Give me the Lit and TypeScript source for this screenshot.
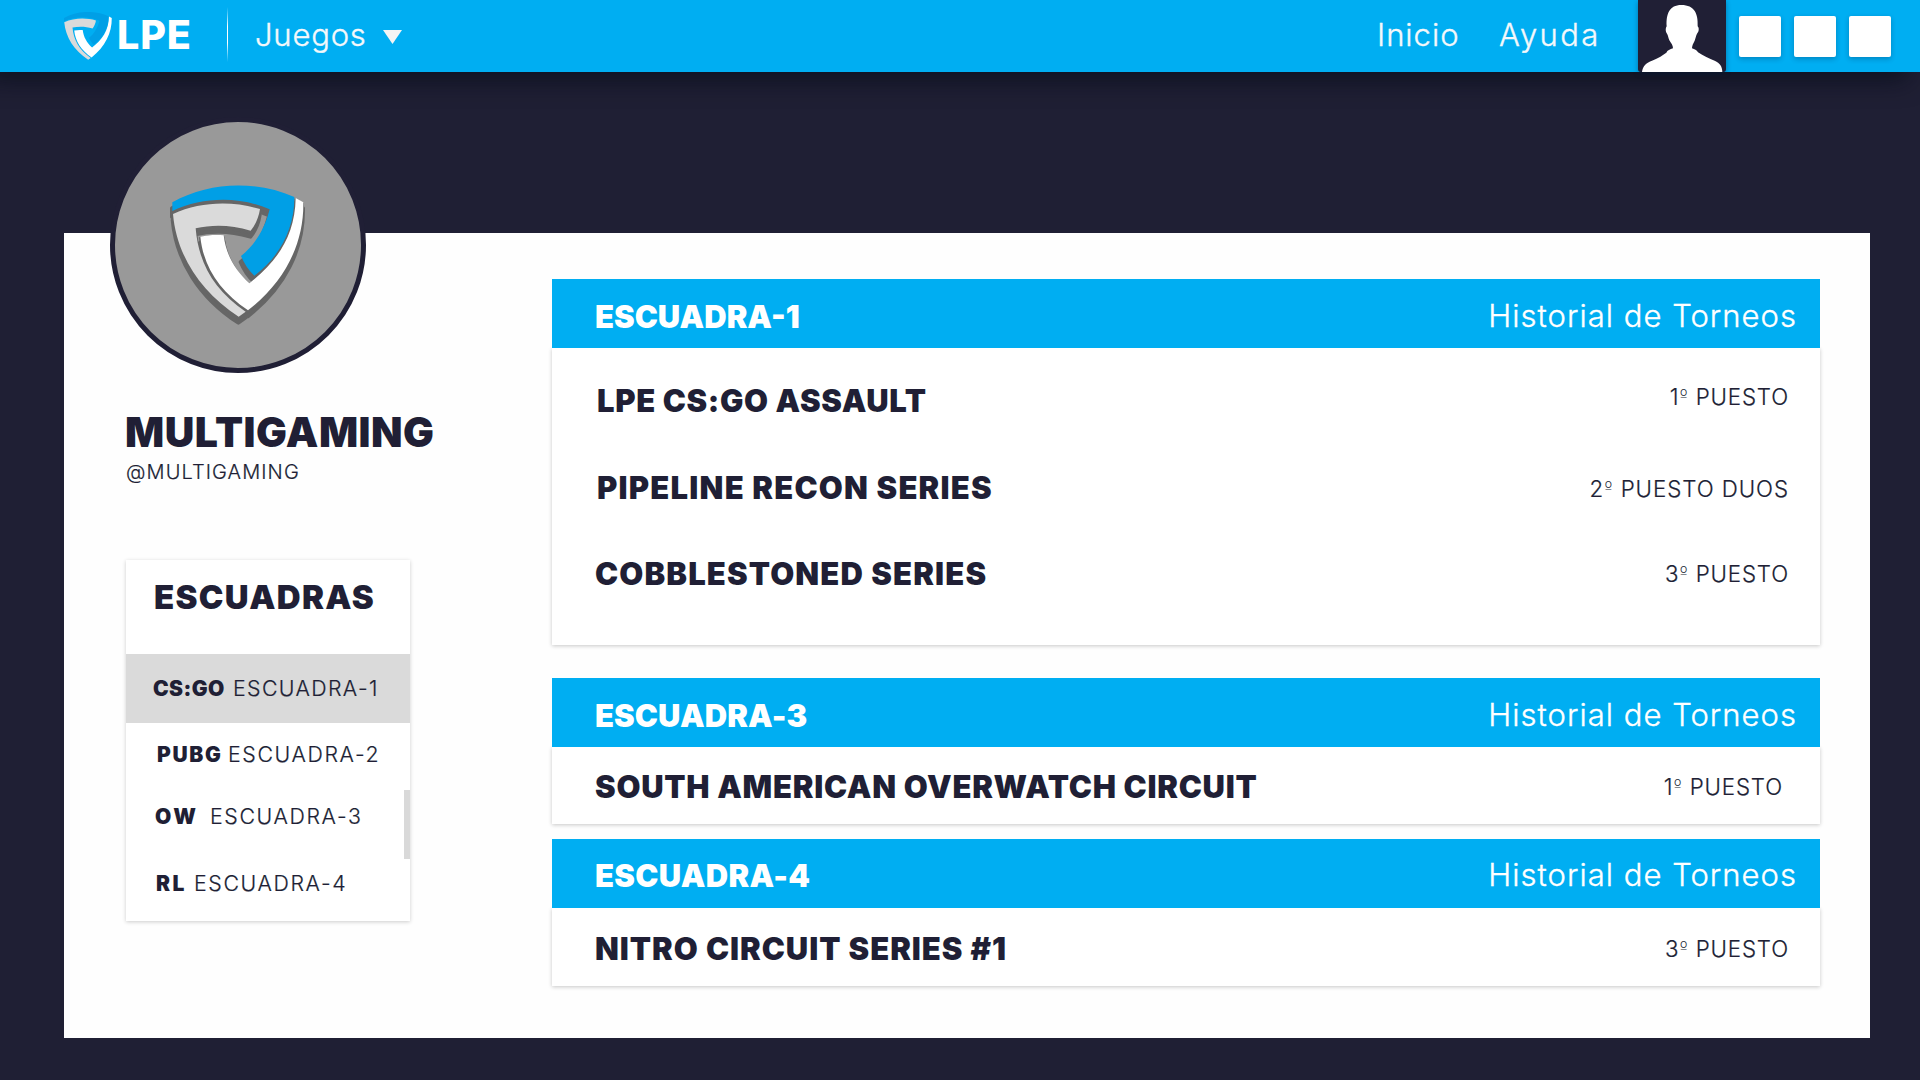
import { LitElement, html, css, svg } from "lit";
import { customElement } from "lit/decorators.js";

interface Result { title: string; place: string; rank: string; cls: string }
interface Squad { name: string; cls: string; results: Result[] }

const MEMBERS = [
  { game: "CS:GO", squad: "ESCUADRA-1", cls: "csgo" },
  { game: "PUBG", squad: "ESCUADRA-2", cls: "pubg" },
  { game: "OW", squad: "ESCUADRA-3", cls: "ow" },
  { game: "RL", squad: "ESCUADRA-4", cls: "rl" },
];

const SQUADS: Squad[] = [
  {
    name: "ESCUADRA-1", cls: "s1",
    results: [
      { title: "LPE CS:GO ASSAULT", place: "1", rank: "PUESTO", cls: "assault" },
      { title: "PIPELINE RECON SERIES", place: "2", rank: "PUESTO DUOS", cls: "pipeline" },
      { title: "COBBLESTONED SERIES", place: "3", rank: "PUESTO", cls: "cobble" },
    ],
  },
  {
    name: "ESCUADRA-3", cls: "s3",
    results: [{ title: "SOUTH AMERICAN OVERWATCH CIRCUIT", place: "1", rank: "PUESTO", cls: "south" }],
  },
  {
    name: "ESCUADRA-4", cls: "s4",
    results: [{ title: "NITRO CIRCUIT SERIES #1", place: "3", rank: "PUESTO", cls: "nitro" }],
  },
];

const BLUE = "M37 82C150 18 290 17 403 66C404 160 360 245 283 302C265 285 252 265 243 243C285 210 315 160 329 103C240 64 130 64 37 108Z";
const GREY = "M39 117C120 80 215 77 300 102C296 128 286 150 272 167C215 150 160 148 107 160C115 260 160 345 257 410L236 425C120 350 50 240 39 117Z";
const WHITE = "M121 185C145 180 168 179 191 181C198 240 225 285 268 325C350 260 405 185 407 69L430 82C432 205 375 320 264 406C180 350 130 275 121 185Z";

const shield = svg`
  <path d=${GREY} fill="#dadada"></path>
  <path d=${WHITE} fill="#fff"></path>
  <path d=${BLUE} fill="#009fe6"></path>`;

@customElement("app-root")
export class AppRoot extends LitElement {
  static styles = css`
    :host {
      display: block;
      width: 1920px;
      height: 1080px;
      overflow: hidden;
      background: #1f1f34;
      color: #201f35;
      font-family: Inter, "Liberation Sans", sans-serif;
      white-space: nowrap;
    }
    * { box-sizing: border-box; }
    .bar {
      position: relative;
      display: flex;
      align-items: center;
      height: 72px;
      padding: 0 29px 0 64px;
      background: #00aef2;
      box-shadow: -12px 8px 24px rgba(0, 8, 20, 0.6);
      color: #f4f8fb;
      font-size: 31px;
      font-weight: 300;
      line-height: 40px;
    }
    .games, .nav, .history { -webkit-text-stroke: 0.35px currentColor; }
    .handle, .squadname, .place { -webkit-text-stroke: 0.2px currentColor; }
    .mark { width: 48px; height: 48px; flex: none; margin-top: -1px; }
    .brand { width: 111px; padding-left: 5px; margin-top: -3px; font-size: 39.5px; font-weight: 800; color: #fff; letter-spacing: 0.8px; }
    .rule { width: 1px; height: 55px; margin: -3px 27px 0 4px; background: linear-gradient(transparent, #fff 35%, #fff 65%, transparent); }
    .games { width: 128px; margin-top: -3px; letter-spacing: 0.8px; }
    .caret { width: 19px; height: 14px; flex: none; margin-top: 1px; }
    .nav { display: flex; margin: -2px 0 0 auto; }
    .home { width: 122px; letter-spacing: 1px; }
    .help { width: 139px; letter-spacing: 2.3px; }
    .user { width: 88px; height: 72px; flex: none; background: #201f35; border-radius: 0 0 3px 3px; box-shadow: 0 2px 5px rgba(0, 30, 60, 0.4); overflow: hidden; }
    .user svg { display: block; width: 100%; height: 100%; }
    .apps { display: flex; gap: 13px; margin: 1px 0 0 13px; }
    .app { width: 42px; height: 41px; border-radius: 2px; background: #fff; box-shadow: 0 2px 5px rgba(0, 40, 80, 0.3); }
    .panel {
      display: flex;
      width: 1806px;
      height: 805px;
      margin: 161px 0 0 64px;
      background: #fefefe;
    }
    .side { width: 488px; flex: none; padding-left: 62px; }
    .avatar {
      position: relative;
      display: flex;
      align-items: center;
      justify-content: center;
      width: 256px;
      height: 256px;
      margin: -116px 0 0 -16px;
      border: 5px solid #201f35;
      border-radius: 50%;
      background: #999;
    }
    .avatar svg { width: 160px; height: 160px; margin: 20px 0 0 4px; }
    .name { margin: 35px 0 0 -1px; font-size: 41px; font-weight: 900; line-height: 48px; letter-spacing: 0.5px; }
    .handle { margin-top: 4px; font-size: 20px; font-weight: 300; line-height: 24px; letter-spacing: 1.1px; }
    .card { position: relative; width: 284px; height: 361px; margin-top: 76px; background: #fff; box-shadow: 0 1px 4px rgba(0, 0, 0, 0.2); }
    .heading { height: 94px; padding-left: 28px; font-size: 33px; font-weight: 900; line-height: 75px; letter-spacing: 1.3px; }
    .member { display: flex; align-items: center; font-size: 21.3px; font-weight: 300; letter-spacing: 1.65px; }
    .game { font-size: 21px; font-weight: 900; }
    .squadname { margin-top: -1px; }
    .csgo { height: 69px; padding-left: 27px; background: #dadada; letter-spacing: 1.4px; }
    .csgo .game { width: 80px; letter-spacing: 0.4px; }
    .pubg { height: 62px; padding-left: 31px; }
    .pubg .game { width: 71px; letter-spacing: 1.7px; }
    .ow { height: 63px; padding-left: 29px; }
    .ow .game { width: 55px; letter-spacing: 2.9px; }
    .rl { height: 70px; padding-left: 30px; }
    .rl .game { width: 38px; letter-spacing: 2.4px; }
    .thumb { position: absolute; right: 0; top: 230px; width: 6px; height: 69px; background: #d9d9d9; }
    .main { width: 1268px; padding-top: 46px; }
    .s1 { margin-bottom: 33px; }
    .s3 { margin-bottom: 15px; }
    .head {
      position: relative;
      display: flex;
      align-items: center;
      justify-content: space-between;
      height: 69px;
      padding: 6px 23px 0 43px;
      background: #00aef2;
      color: #fff;
      font-size: 31px;
      line-height: 40px;
    }
    .s4 .head { padding-top: 4px; }
    .s3 .title { letter-spacing: 0.1px; }
    .s4 .title { letter-spacing: 0.3px; }
    .title { font-weight: 900; }
    .history { margin-top: -1px; font-weight: 300; letter-spacing: 1.02px; }
    .body { background: #fff; box-shadow: 0 1px 4px rgba(0, 0, 0, 0.22); }
    .s1 .body { height: 297px; padding-top: 9px; }
    .row { display: flex; align-items: center; justify-content: space-between; padding: 0 31px 0 43px; font-size: 31px; line-height: 40px; }
    .place { font-size: 22.3px; font-weight: 300; letter-spacing: 0.85px; }
    .ord { font-family: "DejaVu Sans", sans-serif; font-size: 17.5px; line-height: 0; vertical-align: 3px; -webkit-text-stroke: 0; }
    .assault { height: 86px; padding-left: 45px; }
    .assault .title { margin-top: 1px; letter-spacing: 0.65px; }
    .assault .place { margin-bottom: 6px; }
    .pipeline { height: 89px; padding-left: 45px; }
    .pipeline .title { letter-spacing: 1.22px; }
    .pipeline .place { margin-top: 2px; letter-spacing: 0.95px; }
    .cobble { height: 83px; }
    .cobble .title { margin-top: 1px; letter-spacing: 1.14px; }
    .south { height: 77px; padding: 2px 37px 0 43px; }
    .south .title { margin-top: 1px; letter-spacing: 0.74px; }
    .nitro { height: 78px; padding-top: 3px; }
    .nitro .title { margin-top: 1px; letter-spacing: 0.97px; }
  `;

  private renderSquad(s: Squad) {
    return html`
      <section class="squad ${s.cls}">
        <div class="head"><span class="title">${s.name}</span><span class="history">Historial de Torneos</span></div>
        <div class="body">
          ${s.results.map((r) => html`
            <div class="row ${r.cls}">
              <span class="title">${r.title}</span>
              <span class="place">${r.place}<span class="ord">º</span> ${r.rank}</span>
            </div>`)}
        </div>
      </section>`;
  }

  render() {
    return html`
      <header class="bar">
        <svg class="mark" viewBox="37 33 395 393">${shield}</svg>
        <span class="brand">LPE</span>
        <span class="rule"></span>
        <span class="games">Juegos</span>
        <svg class="caret" viewBox="0 0 19 14"><path d="M0 0H19L9.5 14Z" fill="#f4f4f4"></path></svg>
        <nav class="nav"><span class="home">Inicio</span><span class="help">Ayuda</span></nav>
        <div class="user">
          <svg viewBox="54 0 264 216" preserveAspectRatio="none">
            <path fill="#fff" d="M66 216C68 198 80 187 96 182C115 174 130 165 139 158C142 151 150 148 159 145C159 137 154 130 148 121C145 113 144 106 141 101C136 96 136 84 140 79C138 42 148 15 184 15C224 15 235 42 233 79C238 84 237 96 231 101C228 107 227 113 224 122C219 131 216 138 216 145C224 148 230 150 234 157C250 168 268 176 284 182C300 189 307 200 307 216Z"></path>
          </svg>
        </div>
        <div class="apps"><span class="app"></span><span class="app"></span><span class="app"></span></div>
      </header>
      <div class="panel">
        <aside class="side">
          <div class="avatar">
            <svg viewBox="0 0 480 480">
              <g fill="#666" stroke="#666" stroke-width="12" stroke-linejoin="round" transform="translate(-1 18)">
                <path d=${GREY}></path><path d=${WHITE}></path><path d=${BLUE}></path>
              </g>
              <g fill="#666" stroke="#666" stroke-width="6" stroke-linejoin="round" transform="translate(-1 4)">
                <path d=${GREY}></path><path d=${WHITE}></path>
              </g>
              ${shield}
            </svg>
          </div>
          <div class="name">MULTIGAMING</div>
          <div class="handle">@MULTIGAMING</div>
          <div class="card">
            <div class="heading">ESCUADRAS</div>
            ${MEMBERS.map((m) => html`<div class="member ${m.cls}"><span class="game">${m.game}</span><span class="squadname">${m.squad}</span></div>`)}
            <div class="thumb"></div>
          </div>
        </aside>
        <main class="main">${SQUADS.map((s) => this.renderSquad(s))}</main>
      </div>`;
  }
}
